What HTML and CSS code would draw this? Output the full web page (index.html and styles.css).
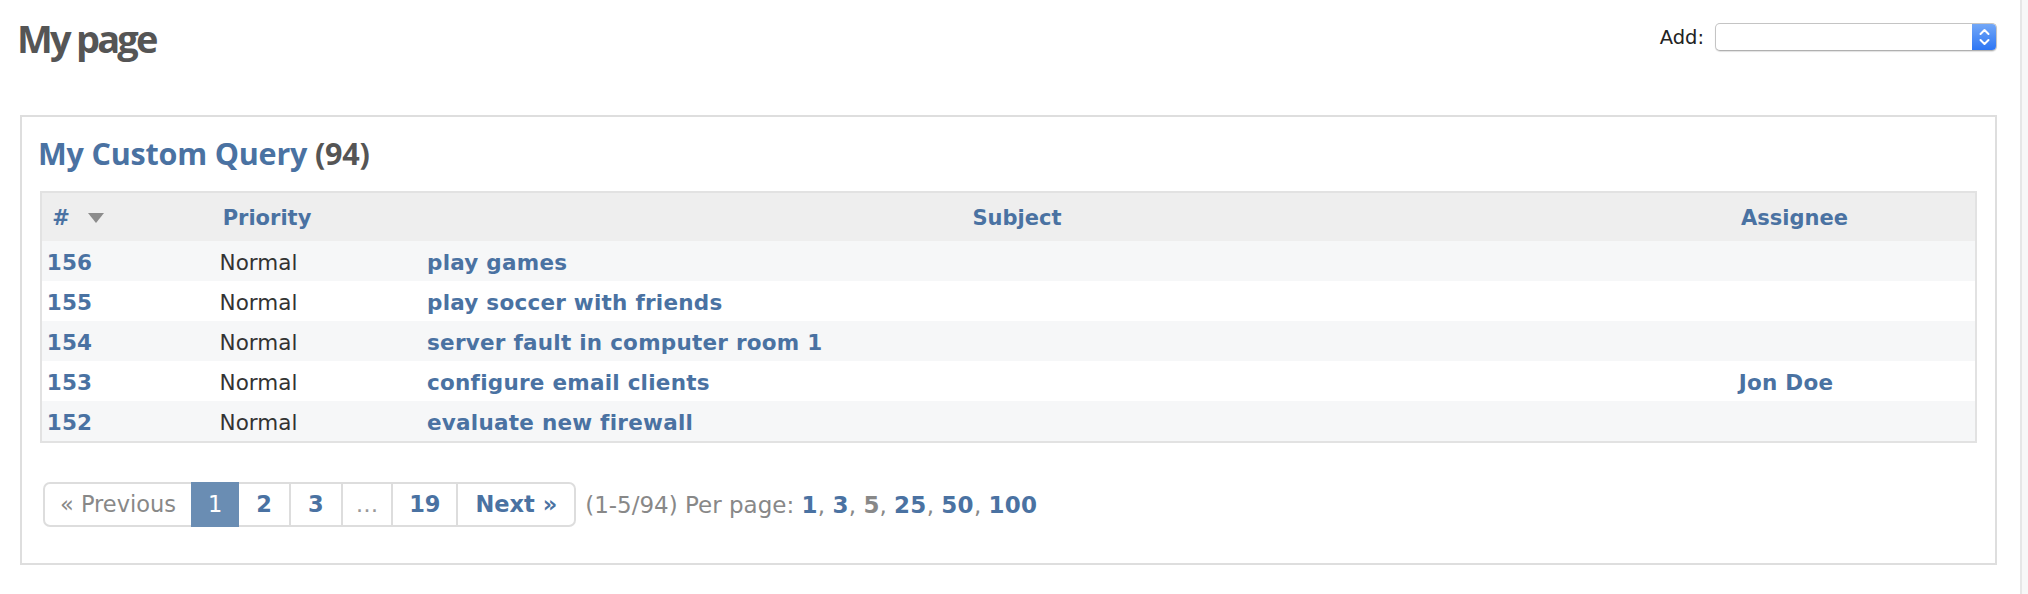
FILE: index.html
```html
<!DOCTYPE html>
<html lang="en">
<head>
<meta charset="utf-8">
<title>My page</title>
<link rel="stylesheet" href="styles.css">
</head>
<body>
<div class="layout">
  <div class="main">
    <div class="topbar">
      <h2 class="page-title">My page</h2>
      <form class="add-block">
        <label class="add-label">Add:</label>
        <div class="select">
          <span class="select-btn">
            <svg width="25" height="28" viewBox="0 0 25 28" aria-hidden="true">
              <path d="M8.5 11 L12.5 7 L16.5 11" fill="none" stroke="#fff" stroke-width="2" stroke-linecap="round" stroke-linejoin="round"/>
              <path d="M8.5 17 L12.5 21 L16.5 17" fill="none" stroke="#fff" stroke-width="2" stroke-linecap="round" stroke-linejoin="round"/>
            </svg>
          </span>
        </div>
      </form>
    </div>

    <div class="box">
      <h3 class="box-title"><a href="#" class="title-link">My Custom Query</a> <span class="count">(94)</span></h3>
      <table class="list">
        <colgroup>
          <col class="c-id"><col class="c-pri"><col class="c-subj"><col class="c-asg">
        </colgroup>
        <thead>
          <tr>
            <th><span class="th-text">#</span><svg class="sort" width="16" height="10" viewBox="0 0 16 10" aria-hidden="true"><path d="M0 0 H16 L8 10 Z" fill="#8c8c8c"/></svg></th>
            <th><span class="th-text">Priority</span></th>
            <th><span class="th-text">Subject</span></th>
            <th><span class="th-text">Assignee</span></th>
          </tr>
        </thead>
        <tbody>
          <tr class="odd"><td class="id"><a href="#">156</a></td><td class="pri">Normal</td><td class="subject"><a href="#">play games</a></td><td class="asg"></td></tr>
          <tr class="even"><td class="id"><a href="#">155</a></td><td class="pri">Normal</td><td class="subject"><a href="#">play soccer with friends</a></td><td class="asg"></td></tr>
          <tr class="odd"><td class="id"><a href="#">154</a></td><td class="pri">Normal</td><td class="subject"><a href="#">server fault in computer room 1</a></td><td class="asg"></td></tr>
          <tr class="even"><td class="id"><a href="#">153</a></td><td class="pri">Normal</td><td class="subject"><a href="#">configure email clients</a></td><td class="asg"><a href="#">Jon Doe</a></td></tr>
          <tr class="odd"><td class="id"><a href="#">152</a></td><td class="pri">Normal</td><td class="subject"><a href="#">evaluate new firewall</a></td><td class="asg"></td></tr>
        </tbody>
      </table>

      <div class="pager">
        <ul class="pages">
          <li class="pg prev">« Previous</li>
          <li class="pg current">1</li>
          <li class="pg link"><a href="#">2</a></li>
          <li class="pg link"><a href="#">3</a></li>
          <li class="pg gap">…</li>
          <li class="pg link wide"><a href="#">19</a></li>
          <li class="pg link next"><a href="#">Next »</a></li>
        </ul>
        <span class="pager-info">(1-5/94) Per page: <a href="#">1</a>, <a href="#">3</a>, <span class="sel">5</span>, <a href="#">25</a>, <a href="#">50</a>, <a href="#">100</a></span>
      </div>
    </div>
  </div>
  <div class="side"></div>
</div>
</body>
</html>
```

FILE: styles.css
```css
html, body {
  margin: 0;
  padding: 0;
  background: #fff;
}

body {
  font-family: "DejaVu Sans", Verdana, sans-serif;
  font-size: 21.5px;
  color: #333;
  width: 2028px;
  height: 594px;
  overflow: hidden;
}

a {
  color: #4a72a2;
  text-decoration: none;
  font-weight: bold;
}

.layout {
  display: flex;
  height: 594px;
}

.main {
  padding: 0 23px 0 20px;
  border-right: 2px solid #e6e6e6;
  box-sizing: content-box;
  width: 1977px;
}

.side {
  flex: 1;
  background: #f7f7f7;
}

/* top bar */
.topbar {
  display: flex;
  justify-content: space-between;
  align-items: flex-start;
  height: 115px;
}

.page-title {
  margin: 0;
  padding-top: 15px;
  margin-left: -3px;
  font-family: "Open Sans", "Noto Sans", sans-serif;
  font-weight: 700;
  font-size: 38px;
  line-height: 46px;
  letter-spacing: -2.8px;
  color: #555;
}

.add-block {
  display: flex;
  align-items: center;
  margin-top: 23px;
}

.add-label {
  font-size: 19.5px;
  color: #222;
  margin-right: 11px;
}

.select {
  width: 280px;
  height: 26px;
  border: 1px solid #c4c4c4;
  border-bottom-color: #b0b0b0;
  border-radius: 5px;
  background: #fff;
  box-shadow: 0 1px 1px rgba(0,0,0,0.12);
  display: flex;
  justify-content: flex-end;
  overflow: hidden;
}

.select-btn {
  width: 25px;
  height: 28px;
  margin: -1px -1px -1px 0;
  background: linear-gradient(#75a9f7, #2a74f4);
  display: block;
}

.select-btn svg {
  display: block;
}

/* box */
.box {
  border: 2px solid #dedede;
  padding: 0 18px;
  height: 446px;
}

.box-title {
  margin: 0;
  padding-top: 15px;
  height: 59px;
  font-family: "Open Sans", "Noto Sans", sans-serif;
  font-weight: 700;
  font-size: 30.5px;
  line-height: 42px;
  letter-spacing: -0.2px;
  margin-left: -2px;
  box-sizing: content-box;
}

.box-title .title-link {
  font-weight: 700;
}

.count {
  color: #555;
}

/* table */
.list {
  width: 100%;
  border-collapse: separate;
  border-spacing: 0;
  table-layout: fixed;
  border: 2px solid #e2e2e2;
}

.c-id { width: 72px; }
.c-pri { width: 306px; }
.c-subj { width: 1194px; }
.c-asg { width: 361px; }

.list th {
  background: #eeeeee;
  height: 46px;
  padding: 2px 0 0 0;
  text-align: center;
  color: #4a72a2;
  font-weight: bold;
  font-size: 21px;
  white-space: nowrap;
}

.sort {
  margin-left: 18px;
  vertical-align: 2px;
}

.list td {
  height: 38px;
  padding: 2px 17px 0 0;
  text-align: center;
  white-space: nowrap;
  color: #333;
}

.list td a {
  letter-spacing: 0.25px;
}

.list td.subject {
  text-align: left;
  padding: 2px 0 0 7px;
}

.list tr.odd td {
  background: #f6f7f8;
}

.list tr.even td {
  background: #fff;
}

/* pager */
.pager {
  display: flex;
  align-items: center;
  margin-top: 39px;
  margin-left: 3px;
  font-size: 22.5px;
}

.pages {
  display: flex;
  list-style: none;
  margin: 0;
  padding: 0;
}

.pg {
  height: 41px;
  line-height: 41px;
  padding: 0 15px;
  border: 2px solid #dddddd;
  margin-left: -2px;
  color: #888;
}

.pg.link {
  padding: 0 17px;
}

.pg.gap {
  padding: 0 13px;
  color: #999;
}

.pg.link.wide {
  padding: 0 16px;
}

.pg:first-child {
  margin-left: 0;
  border-radius: 7px 0 0 7px;
}

.pg:last-child {
  border-radius: 0 7px 7px 0;
}

.pg.current {
  background: #6a8db3;
  border-color: #6a8db3;
  color: #fff;
  position: relative;
}

.pager-info {
  margin-left: 9px;
  color: #888;
  font-size: 23px;
}

.pager-info a {
  letter-spacing: 0.3px;
}

.pager-info .sel {
  font-weight: bold;
  color: #888;
}
```
